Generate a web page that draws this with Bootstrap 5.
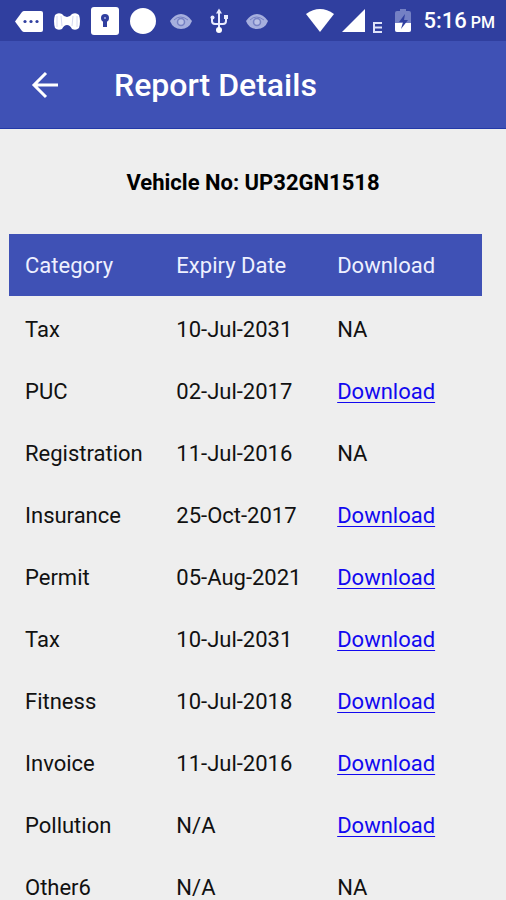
<!DOCTYPE html>
<html lang="en">
<head>
<meta charset="utf-8">
<meta name="viewport" content="width=device-width, initial-scale=1">
<title>Report Details</title>
<link href="https://cdn.jsdelivr.net/npm/bootstrap@5.3.0/dist/css/bootstrap.min.css" rel="stylesheet">
<style>
body { font-family: Roboto, "Liberation Sans", sans-serif; font-size: 22px; line-height: 26px; background: #eee; color: #111; }
.status-bar { background: #303f9f; height: 41px; padding: 0 11px 0 14px; }
.status-icons { gap: 8px; }
.status-bar svg { display: block; flex: none; }
.clock { font-size: 22px; font-weight: 500; line-height: 26px; padding-top: 2px; }
.clock small { font-size: 16px; margin-left: 4px; }
.app-bar { background: #3f51b5; height: 88px; padding: 0 28px; border-bottom: 1px solid #2339a8; }
.app-title { font-size: 32px; line-height: 40px; font-weight: 500; margin-left: 52px; padding-top: 1px; }
.content { scrollbar-width: none; padding: 0 24px 24px 9px; }
.content::-webkit-scrollbar { display: none; }
.vehicle { font-size: 22px; line-height: 26px; font-weight: 700; color: #000; padding: 41px 0 38px 15px; }
.report { table-layout: fixed; }
.report th, .report td { height: 62px; padding: 2px 0 0 16px; font-weight: 400; text-align: left; vertical-align: middle; }
.report td { padding-top: 5px; }
.report thead { background: #3f51b5; color: #eef0ff; }
.report a { color: #1108f0; text-decoration-thickness: 1px; text-underline-offset: 3px; }
.col-cat { width: 32%; }
.col-date { width: 34%; }
</style>
<script src="https://cdn.jsdelivr.net/npm/bootstrap@5.3.0/dist/js/bootstrap.bundle.min.js"></script>
</head>
<body>
<div class="vh-100 d-flex flex-column overflow-hidden">
  <div class="status-bar d-flex align-items-center justify-content-between text-white flex-shrink-0">
    <div class="status-icons d-flex align-items-center">
      <svg width="30" height="30" viewBox="0 0 30 30" aria-hidden="true"><path d="M10 5h17q2 0 2 2v17q0 2-2 2H10q-1 0-2-1L1 15.500 8 6q1-1 2-1z" fill="#fff"/><g fill="#303f9f"><circle cx="11" cy="15.500" r="1.600"/><circle cx="17" cy="15.500" r="1.600"/><circle cx="23" cy="15.500" r="1.600"/></g></svg>
      <svg width="30" height="30" viewBox="0 0 30 30" aria-hidden="true"><path d="M3 9q3-3 7-1 2 3 5 3t5-3q4-2 7 1 2 6 0 13-3 3-7 1-2-4-5-4t-5 4q-4 2-7-1-2-7 0-13z" fill="#fff"/><path d="M5 10v11M9 10l1 10M21 10l-1 10M25 10v11" stroke="#d5d9f0"/></svg>
      <svg width="30" height="30" viewBox="0 0 30 30" aria-hidden="true"><rect x="1" y="1" width="28" height="28" rx="3" fill="#fff"/><circle cx="15" cy="12" r="4" fill="#303f9f"/><path d="M13 12h4v9h-4z" fill="#303f9f"/><circle cx="15" cy="12" r="1" fill="#aab2e0"/></svg>
      <svg width="30" height="30" viewBox="0 0 30 30" aria-hidden="true"><circle cx="15" cy="15" r="13" fill="#fff"/></svg>
      <svg width="30" height="30" viewBox="0 0 30 30" aria-hidden="true"><path d="M4 15q5-7 11-7t11 7q-3 8-11 8T4 15z" fill="#a6afde"/><path d="M8 14q6-6 14 0" fill="none" stroke="#7681c3"/><circle cx="15" cy="16" r="3.500" fill="#b9c0e6" stroke="#7681c3" stroke-width="1.500"/></svg>
      <svg width="30" height="30" viewBox="0 0 30 30" aria-hidden="true"><path d="M15 5v20M8 11v4q0 3 3 3h8q3 0 3-3v-4" fill="none" stroke="#e9ecff" stroke-width="2"/><path d="M15 2.500l3 5h-6z" fill="#e9ecff"/><circle cx="15" cy="24" r="3" fill="#fff"/><circle cx="8.500" cy="11.500" r="2" fill="#e9ecff"/><path d="M20 9h4v4h-4z" fill="#e9ecff"/></svg>
      <svg width="30" height="30" viewBox="0 0 30 30" aria-hidden="true"><path d="M4 15q5-7 11-7t11 7q-3 8-11 8T4 15z" fill="#a6afde"/><path d="M8 14q6-6 14 0" fill="none" stroke="#7681c3"/><circle cx="15" cy="16" r="3.500" fill="#b9c0e6" stroke="#7681c3" stroke-width="1.500"/></svg>
    </div>
    <div class="status-icons d-flex align-items-center">
      <svg width="28" height="30" viewBox="0 0 28 30" aria-hidden="true"><path d="M0 8q14-10 28 0L14 26z" fill="#fff"/></svg>
      <svg width="23" height="30" viewBox="0 0 23 30" aria-hidden="true"><path d="M23 3v23H0z" fill="#fff"/></svg>
      <svg width="10" height="30" viewBox="0 0 10 30" aria-hidden="true"><path d="M1 16v11M0 17h9M0 21.500h9M0 26h9" stroke="#e0e4fa" stroke-width="2"/></svg>
      <svg class="ms-1" width="16" height="30" viewBox="0 0 16 30" aria-hidden="true"><path d="M5 3h6v2h3q2 0 2 2v17q0 2-2 2H2q-2 0-2-2V7q0-2 2-2h3z" fill="#7480c4"/><path d="M0 17h16v7q0 2-2 2H2q-2 0-2-2z" fill="#fff"/><path d="M10 8l-6 8h4l-2 7 7-9H9z" fill="#303f9f"/></svg>
      <div class="clock text-nowrap ms-1">5:16<small>PM</small></div>
    </div>
  </div>
  <header class="app-bar d-flex align-items-center text-white flex-shrink-0">
    <button type="button" class="btn p-0 border-0 text-white lh-1" aria-label="Back">
      <svg class="d-block" width="34" height="34" viewBox="0 0 34 34" fill="none" stroke="#fff" stroke-width="3" aria-hidden="true"><path d="M30 17H6M18 5L6 17l12 12"/></svg>
    </button>
    <h1 class="app-title mb-0">Report Details</h1>
  </header>
  <main class="content flex-grow-1 overflow-auto">
    <h2 class="vehicle text-center mb-0">Vehicle No: UP32GN1518</h2>
    <table class="report w-100">
      <colgroup><col class="col-cat"><col class="col-date"><col></colgroup>
      <thead><tr><th scope="col">Category</th><th scope="col">Expiry Date</th><th scope="col">Download</th></tr></thead>
      <tbody>
        <tr><td>Tax</td><td>10-Jul-2031</td><td>NA</td></tr>
        <tr><td>PUC</td><td>02-Jul-2017</td><td><a href="#">Download</a></td></tr>
        <tr><td>Registration</td><td>11-Jul-2016</td><td>NA</td></tr>
        <tr><td>Insurance</td><td>25-Oct-2017</td><td><a href="#">Download</a></td></tr>
        <tr><td>Permit</td><td>05-Aug-2021</td><td><a href="#">Download</a></td></tr>
        <tr><td>Tax</td><td>10-Jul-2031</td><td><a href="#">Download</a></td></tr>
        <tr><td>Fitness</td><td>10-Jul-2018</td><td><a href="#">Download</a></td></tr>
        <tr><td>Invoice</td><td>11-Jul-2016</td><td><a href="#">Download</a></td></tr>
        <tr><td>Pollution</td><td>N/A</td><td><a href="#">Download</a></td></tr>
        <tr><td>Other6</td><td>N/A</td><td>NA</td></tr>
      </tbody>
    </table>
  </main>
</div>
</body>
</html>
